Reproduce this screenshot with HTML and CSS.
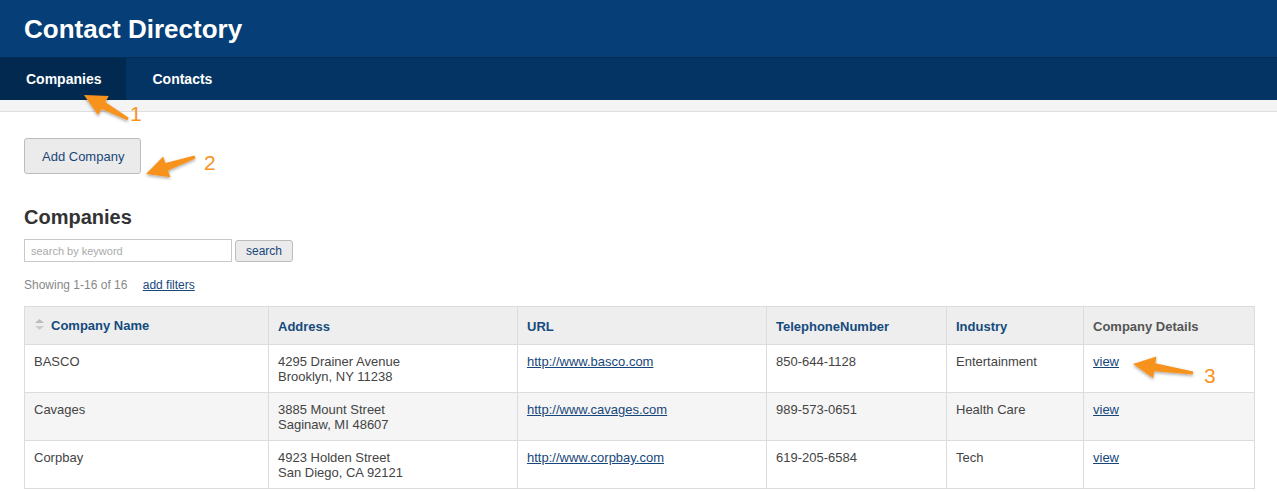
FILE: index.html
```html
<!DOCTYPE html>
<html lang="en">
<head>
    <meta charset="UTF-8">
    <title>Contact Directory</title>
    <link rel="stylesheet" href="styles.css">
</head>
<body>
    <header class="site-header">
        <h1>Contact Directory</h1>
    </header>
    <nav class="main-nav">
        <a class="tab active" href="#">Companies</a>
        <a class="tab" href="#">Contacts</a>
    </nav>
    <div class="sub-strip"></div>

    <main class="content">
        <button class="btn btn-add">Add Company</button>

        <h2>Companies</h2>
        <form class="search-form">
            <input type="text" class="search-input" placeholder="search by keyword">
            <button type="button" class="btn btn-search">search</button>
        </form>
        <p class="result-info">Showing 1-16 of 16 <a href="#">add filters</a></p>

        <table class="grid">
            <colgroup>
                <col style="width:244px">
                <col style="width:249px">
                <col style="width:249px">
                <col style="width:180px">
                <col style="width:137px">
                <col>
            </colgroup>
            <thead>
                <tr>
                    <th><span class="sort-icon"><svg width="11" height="14" viewBox="0 0 11 14"><path d="M5.5 1 L10 5 L1 5 Z" fill="#bbb"/><path d="M1 8 L10 8 L5.5 12 Z" fill="#ccc"/></svg></span>Company Name</th>
                    <th>Address</th>
                    <th>URL</th>
                    <th>TelephoneNumber</th>
                    <th>Industry</th>
                    <th class="plain">Company Details</th>
                </tr>
            </thead>
            <tbody>
                <tr>
                    <td>BASCO</td>
                    <td>4295 Drainer Avenue<br>Brooklyn, NY 11238</td>
                    <td><a href="#">http://www.basco.com</a></td>
                    <td>850-644-1128</td>
                    <td>Entertainment</td>
                    <td><a href="#">view</a></td>
                </tr>
                <tr>
                    <td>Cavages</td>
                    <td>3885 Mount Street<br>Saginaw, MI 48607</td>
                    <td><a href="#">http://www.cavages.com</a></td>
                    <td>989-573-0651</td>
                    <td>Health Care</td>
                    <td><a href="#">view</a></td>
                </tr>
                <tr>
                    <td>Corpbay</td>
                    <td>4923 Holden Street<br>San Diego, CA 92121</td>
                    <td><a href="#">http://www.corpbay.com</a></td>
                    <td>619-205-6584</td>
                    <td>Tech</td>
                    <td><a href="#">view</a></td>
                </tr>
            </tbody>
        </table>
    </main>

    <!-- annotation arrows drawn over the screenshot -->
    <svg class="annotations" width="1277" height="492" viewBox="0 0 1277 492">
        <defs>
            <filter id="shadow" x="-20%" y="-20%" width="140%" height="140%">
                <feDropShadow dx="0" dy="1.5" stdDeviation="1.5" flood-color="#000" flood-opacity="0.35"/>
            </filter>
        </defs>
        <g fill="#f7931e" filter="url(#shadow)">
            <polygon points="84,95 108.7,95.9 105.3,102.1 128.7,117.7 127.3,120.3 101.5,109.1 98.1,115.3"/>
            <polygon points="146,174 163.2,156.4 165.5,163 194.5,155.6 195.5,158.4 168.1,170.6 170.4,177.2"/>
            <polygon points="1133,364 1156.4,356.4 1155.4,363.3 1193.2,371.5 1192.8,374.5 1154.2,371.3 1153.2,378.2"/>
        </g>
        <g class="anno-num" fill="#f7931e">
            <text x="130" y="121">1</text>
            <text x="204" y="170">2</text>
            <text x="1204" y="383">3</text>
        </g>
    </svg>
</body>
</html>
```

FILE: styles.css
```css
/* Contact directory page */
body {
    font-family: "Liberation Sans", Arial, sans-serif;
    background-color: #fff;
    color: #444;
    margin: 0;
    padding: 0;
    position: relative;
}

.site-header {
    background-color: #063f77;
    height: 57px;
    padding: 1px 24px 0;
    box-sizing: border-box;
    display: flex;
    align-items: center;
}

.site-header h1 {
    margin: 0;
    color: #fff;
    font-size: 26px;
    font-weight: bold;
}

.main-nav {
    background-color: #043463;
    height: 42px;
    display: flex;
    border-top: 1px solid #032c55;
}

.main-nav .tab {
    display: flex;
    align-items: center;
    padding: 0 25px 0 26px;
    color: #fff;
    font-size: 14px;
    font-weight: bold;
    text-decoration: none;
}

.main-nav .tab.active {
    background-color: #022a51;
}

.sub-strip {
    height: 11px;
    background-color: #f4f4f4;
    border-bottom: 1px solid #dedede;
}

.content {
    padding: 26px 22px 0 24px;
}

.btn {
    font-family: "Liberation Sans", Arial, sans-serif;
    background-color: #ebebeb;
    border: 1px solid #bdbdbd;
    border-radius: 3px;
    color: #17477a;
    cursor: pointer;
}

.btn-add {
    height: 36px;
    padding: 0 16px 0 17px;
    font-size: 13px;
}

h2 {
    margin: 32px 0 10px;
    font-size: 20px;
    color: #333;
}

.search-form {
    display: flex;
    align-items: center;
    gap: 3px;
}

.search-input {
    width: 208px;
    height: 23px;
    box-sizing: border-box;
    border: 1px solid #c8c8c8;
    padding: 0 6px;
    font-family: "Liberation Sans", Arial, sans-serif;
    font-size: 11px;
    margin: 0;
}

.search-input::placeholder {
    color: #aaa;
}

.btn-search {
    height: 22px;
    width: 58px;
    padding: 0;
    font-size: 12px;
}

.result-info {
    margin: 16px 0 14px;
    font-size: 12px;
    color: #888;
}

.result-info a {
    margin-left: 12px;
    color: #17477a;
}

.grid {
    width: 100%;
    border-collapse: collapse;
    table-layout: fixed;
    font-size: 13px;
}

.grid th,
.grid td {
    border: 1px solid #dcdcdc;
    text-align: left;
    padding: 0 9px;
}

.grid th {
    background-color: #eeeeee;
    color: #154a7d;
    height: 38px;
    padding-top: 2px;
    box-sizing: border-box;
    font-weight: bold;
}

.grid th.plain {
    color: #555;
}

.sort-icon {
    display: inline-block;
    vertical-align: -2px;
    margin-right: 6px;
}

.grid td {
    height: 48px;
    vertical-align: top;
    padding-top: 9px;
    padding-bottom: 0;
    box-sizing: border-box;
    line-height: 15px;
    color: #444;
}

.grid tbody tr:nth-child(even) td {
    background-color: #f5f5f5;
}

.grid td a {
    color: #17477a;
}

.annotations {
    position: absolute;
    left: 0;
    top: 0;
    pointer-events: none;
}

.anno-num text {
    font-family: "Liberation Sans", Arial, sans-serif;
    font-size: 21px;
}
```
